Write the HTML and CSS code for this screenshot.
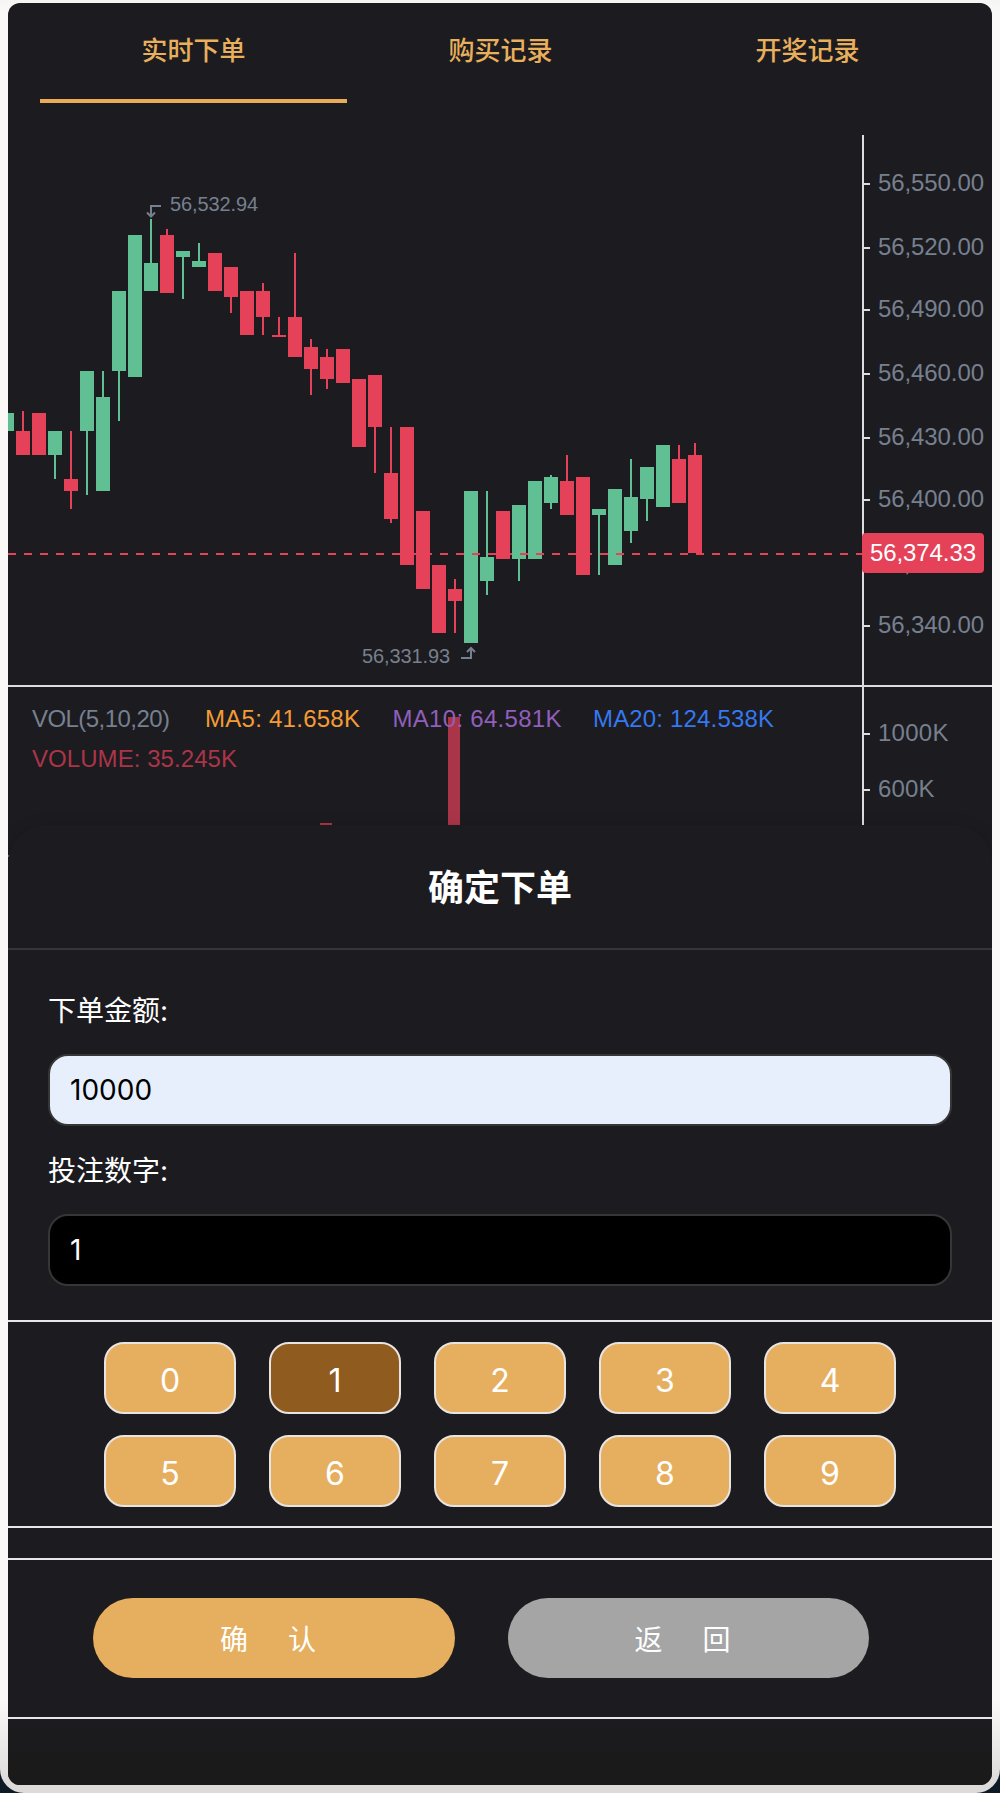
FILE: index.html
```html
<!DOCTYPE html>
<html lang="zh-CN">
<head>
<meta charset="utf-8">
<title>实时下单</title>
<link rel="stylesheet" href="styles.css">
</head>
<body>
<div class="device">
  <div class="screen">
    <nav class="tabs">
      <a class="tab tab-active">实时下单</a>
      <a class="tab">购买记录</a>
      <a class="tab">开奖记录</a>
    </nav>

    <svg class="chart" viewBox="8 103 984 770" width="984" height="770">
      <g id="candles"></g>
      <path class="last-line" d="M8 554H862"/>
      <g class="pointer">
        <path d="M161 206H151V216M147 212.500L151 216.500L155 212.500"/>
        <path d="M461 658H471V648M467 652L471 648L475 652"/>
      </g>
      <text class="extreme" x="170" y="211" textLength="88">56,532.94</text>
      <text class="extreme" x="362" y="663" textLength="88">56,331.93</text>

      <rect class="volume" x="448" y="717" width="12" height="110"/>
      <rect class="volume" x="320" y="823" width="12" height="6"/>
      <rect x="8" y="855" width="2" height="2" fill="#7d58b5"/>

      <g id="axis"></g>
      <path class="axis" d="M863 135V860M8 686H992"/>
      <path d="M906.500 573h2l-1 1.500h-1z" fill="#76808f"/>
      <rect class="tag" x="862" y="533" width="122" height="40" rx="4"/>
      <text class="tag-text" x="870" y="561" textLength="106">56,374.33</text>

      <text x="32" y="727" class="label" textLength="138">VOL(5,10,20)</text>
      <text x="205" y="727" fill="#f49b36" textLength="155">MA5: 41.658K</text>
      <text x="392.500" y="727" fill="#905fbc" textLength="169">MA10: 64.581K</text>
      <text x="593" y="727" fill="#3578f0" textLength="181">MA20: 124.538K</text>
      <text x="32" y="767" fill="#ab3548" textLength="205">VOLUME: 35.245K</text>
    </svg>

    <section class="sheet">
      <h2 class="sheet-title">确定下单</h2>
      <form class="form">
        <div class="field-label">下单金额:</div>
        <div class="field field-filled">10000</div>
        <div class="field-label">投注数字:</div>
        <div class="field">1</div>
      </form>
      <div class="keypad">
        <div class="key">0</div><div class="key key-selected">1</div><div class="key">2</div><div class="key">3</div><div class="key">4</div>
        <div class="key">5</div><div class="key">6</div><div class="key">7</div><div class="key">8</div><div class="key">9</div>
      </div>
      <div class="actions">
        <div class="action">确 认</div>
        <div class="action action-back">返 回</div>
      </div>
    </section>
  </div>
</div>
<script src="chart.js"></script>
</body>
</html>
```
FILE: styles.css
```css
* { box-sizing: border-box; }

body {
  margin: 0;
  background: #0d1a26;
  font-family: Inter, "Noto Sans CJK SC", sans-serif;
  color: #fff;
}

.device {
  height: 1793px;
  padding: 3px 8px 8px;
  border-radius: 0 0 24px 24px;
  background: linear-gradient(#f5f5f4 0, #faf9f7 12px, #faf9f7 1700px, #dcdbda 1785px);
}

.screen {
  height: 1782px;
  border-radius: 12px;
  overflow: hidden;
  background: #1c1b1f;
}

.tabs {
  display: grid;
  grid-template-columns: repeat(3, 307px);
  height: 100px;
  padding-left: 32px;
}

.tab {
  height: 100px;
  padding-bottom: 1px;
  border-bottom: 4px solid transparent;
  text-align: center;
  font-size: 26px;
  font-weight: 500;
  line-height: 96px;
  color: #e8b05c;
}

.tab-active { border-bottom-color: #ebac57; }

/* Chart */
.chart {
  display: block;
  font-family: "Liberation Sans", Arial, sans-serif;
  font-size: 24px;
}

.up { fill: #61bf94; }
.down { fill: #e5425a; }
.volume { fill: #ab3548; }
.axis { fill: none; stroke: #dddddf; stroke-width: 2; }
.label { fill: #76808f; }
.extreme { fill: #76808f; font-size: 20px; }
.pointer { fill: none; stroke: #76808f; stroke-width: 2; }
.last-line { stroke: #e5425a; stroke-width: 2; stroke-dasharray: 8 8; }
.tag { fill: #e5425a; }
.tag-text { fill: #fff; }

/* Order sheet */
.sheet {
  position: relative;
  height: 960px;
  margin-top: -48px;
  border-radius: 40px 40px 0 0;
  background: linear-gradient(#1c1b1f 0, #1c1b1f 895px, #1a1a1b 935px);
  box-shadow: 0 8px 20px rgba(0, 0, 0, 0.3);
}

.sheet-title {
  height: 125px;
  margin: 0;
  border-bottom: 2px solid #363636;
  text-align: center;
  font-size: 36px;
  font-weight: 600;
  line-height: 126px;
}

.form { padding: 40px 40px 34px; }

.field-label {
  height: 40px;
  margin-bottom: 24px;
  font-size: 28px;
  line-height: 42px;
}

.field {
  height: 72px;
  padding-left: 20px;
  border: 2px solid #363636;
  border-radius: 20px;
  background: #000;
  font-size: 28px;
  line-height: 69px;
}

.field-filled {
  margin-bottom: 24px;
  background: #e8effc;
  color: #000;
}

.keypad {
  display: grid;
  grid-template-columns: repeat(5, 132px);
  grid-auto-rows: 72px;
  gap: 21px 33px;
  height: 208px;
  padding: 20px 0 0 96px;
  border-top: 2px solid #e8e6e8;
  border-bottom: 2px solid #e8e6e8;
}

.key {
  border: 2px solid #e8e4e1;
  border-radius: 20px;
  background: #e6af60;
  text-align: center;
  font-size: 32px;
  line-height: 73px;
}

.key-selected { background: #905b1e; }

.actions {
  display: grid;
  grid-template-columns: 362px 361px;
  gap: 53px;
  height: 161px;
  margin-top: 30px;
  padding: 38px 0 0 85px;
  border-top: 2px solid #e8e6e8;
  border-bottom: 2px solid #e8e6e8;
}

.action {
  height: 80px;
  border-radius: 40px;
  background: #e6af60;
  text-align: center;
  font-size: 28px;
  line-height: 84px;
  letter-spacing: 12px;
  word-spacing: 8px;
}

.action-back { background: #a5a5a5; }
```
FILE: chart.js
```js
// Each candle: [direction, wick top, body top, body bottom, wick bottom], 16px apart.
const candles = [
  ["up", 413, 413, 431, 431], ["down", 411, 431, 455, 455], ["down", 413, 413, 455, 455],
  ["up", 431, 431, 455, 479], ["down", 431, 479, 491, 509], ["up", 371, 371, 431, 495],
  ["up", 371, 397, 491, 491], ["up", 291, 291, 371, 421], ["up", 235, 235, 377, 377],
  ["up", 219, 263, 291, 291], ["down", 229, 235, 293, 293], ["up", 251, 251, 257, 299],
  ["up", 243, 261, 267, 267], ["down", 253, 253, 291, 291], ["down", 267, 267, 297, 313],
  ["down", 291, 291, 335, 335], ["down", 283, 291, 317, 335], ["down", 317, 335, 337, 337],
  ["down", 253, 317, 357, 357], ["down", 339, 347, 369, 395], ["down", 349, 357, 379, 389],
  ["down", 349, 349, 383, 383], ["down", 379, 379, 447, 447], ["down", 375, 375, 427, 473],
  ["down", 427, 473, 519, 523], ["down", 427, 427, 565, 565], ["down", 511, 511, 589, 589],
  ["down", 565, 565, 633, 633], ["down", 579, 589, 601, 633], ["up", 491, 491, 643, 643],
  ["up", 491, 557, 581, 595], ["down", 511, 511, 559, 559], ["up", 505, 505, 559, 581],
  ["up", 481, 481, 559, 559], ["up", 475, 477, 503, 509], ["down", 455, 481, 515, 515],
  ["down", 477, 477, 575, 575], ["up", 509, 509, 515, 575], ["up", 489, 489, 565, 565],
  ["up", 459, 497, 531, 543], ["up", 467, 467, 499, 521], ["up", 445, 445, 507, 507],
  ["down", 445, 459, 503, 503], ["down", 443, 455, 553, 553]
];

const ticks = [
  [184, "56,550.00", 106], [248, "56,520.00", 106], [310, "56,490.00", 106], [374, "56,460.00", 106],
  [438, "56,430.00", 106], [500, "56,400.00", 106], [626, "56,340.00", 106],
  [734, "1000K", 70.5], [790, "600K", 56.5]
];

document.getElementById("candles").innerHTML = candles.map(([dir, high, top, bottom, low], i) => {
  const x = i * 16;
  return `<path class="${dir}" d="M${x} ${top}h14V${bottom}h-14zM${x + 6} ${high}h2V${low}h-2z"/>`;
}).join("");

document.getElementById("axis").innerHTML = ticks.map(([y, text, width]) =>
  `<path class="axis" d="M864 ${y}h6"/><text class="label" x="878" y="${y + 7}" textLength="${width}">${text}</text>`
).join("");
```
